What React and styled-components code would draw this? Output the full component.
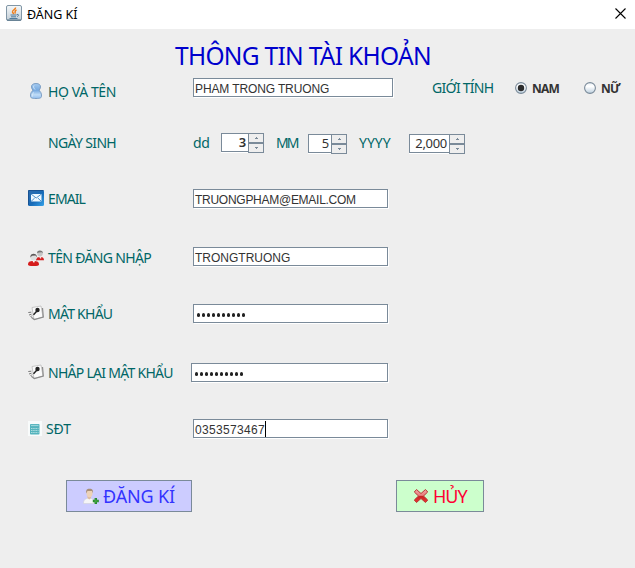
import React from 'react';
import styled, { createGlobalStyle } from 'styled-components';

const Global = createGlobalStyle`
  * { box-sizing: border-box; }
  body { margin: 0; background: #eee; font-family: "Noto Sans", "DejaVu Sans", sans-serif; overflow: hidden; }
`;

const Window = styled.div`
  width: 635px;
  height: 568px;
  background: #eee;
  overflow: hidden;
`;

const TitleBar = styled.header`
  height: 29px;
  background: #fff;
  display: flex;
  align-items: center;
  padding: 0 9px 3px 6px;
`;

const WindowTitle = styled.span`
  flex: 1;
  margin: 3px 0 0 5px;
  font-size: 12.5px;
  line-height: 16px;
  letter-spacing: -0.05px;
  color: #000;
`;

const Form = styled.main`
  display: grid;
  grid-template-rows: 49px 55px 56px 58px 57px 59px 56px 61px 32px;
`;

const Heading = styled.h1`
  margin: 9px 0 0 175px;
  font-size: 24.5px;
  line-height: 36px;
  font-weight: 400;
  letter-spacing: ${(p) => p.$spacing}px;
  color: #0000cd;
  white-space: nowrap;
`;

const Row = styled.div`
  display: flex;
  align-items: flex-start;
  padding-left: 28px;
`;

const Label = styled.div`
  display: flex;
  align-items: center;
  flex: none;
  width: ${(p) => p.$width || 165}px;
  height: 16px;
  margin-top: ${(p) => p.$top || 0}px;
  padding-left: ${(p) => p.$indent || 0}px;
  gap: 4px;
  font-size: 14px;
  line-height: 16px;
  letter-spacing: ${(p) => p.$spacing || 0}px;
  color: #006666;
  white-space: nowrap;
  svg { flex: none; margin-bottom: ${(p) => p.$lift || 0}px; }
`;

const Field = styled.div`
  flex: none;
  display: flex;
  align-items: center;
  width: ${(p) => p.$width || 195}px;
  height: 19px;
  padding: 3px 0 0 1px;
  border: 1px solid #7a8a99;
  box-shadow: 1px 1px 0 #fff;
  background: #fff;
  color: #333;
  font: 12px/14px "Liberation Sans", Arial, sans-serif;
  letter-spacing: ${(p) => p.$spacing || 0}px;
  white-space: nowrap;
`;

const Caret = styled.i`
  width: 1px;
  height: 16px;
  margin-top: -2px;
  background: #000;
`;

const Dots = styled.span`
  display: flex;
  gap: 1.5px;
  padding-left: 1.5px;
`;

const Dot = styled.i`
  width: 3.5px;
  height: 3.5px;
  border-radius: 50%;
  background: #222;
`;

const SpinnerBox = styled.div`
  flex: none;
  display: flex;
  width: ${(p) => p.$width}px;
  height: 20px;
  margin-top: ${(p) => p.$top || 0}px;
`;

const SpinnerValue = styled.span`
  flex: 1;
  height: 19px;
  padding-right: 2px;
  border: 1px solid #7a8a99;
  border-right: 0;
  box-shadow: 0 1px 0 #fff;
  background: #fff;
  color: #333;
  text-align: right;
  font-size: 13px;
  font-weight: ${(p) => (p.$strong ? 600 : 400)};
  line-height: 17px;
  letter-spacing: -0.3px;
`;

const SpinnerButtons = styled.span`
  display: grid;
  grid-template-rows: 10px 10px;
  width: 16px;
`;

const Step = styled.span`
  display: flex;
  align-items: center;
  justify-content: center;
  border: 1px solid #7a8a99;
`;

const Radio = styled.span`
  display: flex;
  align-items: center;
  flex: none;
  width: ${(p) => p.$width}px;
  height: 16px;
  margin-top: 2px;
  gap: 5px;
  font-size: 12px;
  font-weight: 700;
  line-height: 16px;
  letter-spacing: -0.8px;
  color: #333;
`;

const RadioText = styled.span`
  padding-top: 2px;
`;

const Actions = styled.div`
  display: flex;
  padding-left: 66px;
  gap: 204px;
`;

const ActionButton = styled.button`
  display: flex;
  align-items: center;
  width: ${(p) => p.$width}px;
  height: 32px;
  padding: 0 0 0 16px;
  gap: 4px;
  border: 1px solid #7a8a99;
  background: ${(p) => p.$bg};
  color: ${(p) => p.$color};
  font: 18px/24px "Noto Sans", sans-serif;
  letter-spacing: ${(p) => p.$spacing || 0}px;
  white-space: nowrap;
`;

const JavaIcon = () => (
  <svg width="16" height="16" viewBox="0 0 16 16">
    <defs>
      <linearGradient id="jv" x2="0" y2="1"><stop stopColor="#f5f8fa" /><stop offset="1" stopColor="#c3ced6" /></linearGradient>
    </defs>
    <rect x=".5" y=".5" width="15" height="15" rx="1.5" fill="url(#jv)" stroke="#8196a6" />
    <path d="M1 15h14" stroke="#527186" />
    <path d="M9.500 2.500C10 4.500 6 5 6.500 7c.3 1 1.300 1.200 1 2.300M10.500 5C8 6 9.800 7 8.800 8.500" fill="none" stroke="#f07d18" strokeWidth="1.500" />
    <path d="M4.500 10h6M5 11.800h5M3.500 13.500h8M10.800 9.500c2.500-.6 2.300 1.500.2 2" fill="none" stroke="#527c9d" strokeWidth="1" />
  </svg>
);

const CloseIcon = () => (
  <svg width="11" height="11" viewBox="0 0 11 11"><path d="M.5.5l10 10M10.500.5l-10 10" stroke="#000" strokeWidth="1.100" /></svg>
);

const PersonIcon = () => (
  <svg width="16" height="16" viewBox="0 0 16 16">
    <defs><linearGradient id="pn" x2="0" y2="1"><stop stopColor="#a4cbf1" /><stop offset=".45" stopColor="#77a9df" /><stop offset=".75" stopColor="#c0dcf7" /><stop offset="1" stopColor="#91bcec" /></linearGradient></defs>
    <path d="M8 .5C4.800.5 3.300 2 3.500 4c.1 1.500.8 2.400 1.500 3.300C3.500 8.500 2.500 10 2.500 13c0 2 1.500 2.500 5.500 2.500s5.500-.5 5.500-2.500c0-3-1-4.500-2.500-5.700C11.700 6.400 12.400 5.500 12.500 4 12.600 2 11.200.5 8 .5z" fill="url(#pn)" stroke="#7e9fc4" />
    <path d="M6 2.500C5 4 6 5.500 7 6.500M5.500 9.500C4.500 11 4.300 12 4.500 13.500" fill="none" stroke="#d8eafa" />
  </svg>
);

const MailIcon = () => (
  <svg width="16" height="16" viewBox="0 0 16 16">
    <defs><linearGradient id="ml" x2="1" y2="1"><stop stopColor="#2d6cae" /><stop offset=".55" stopColor="#176ab7" /><stop offset="1" stopColor="#35a3ea" /></linearGradient></defs>
    <rect width="16" height="16" rx="1.500" fill="url(#ml)" />
    <path d="M.5 15V.5h15" fill="none" stroke="#185292" />
    <rect x="3" y="4" width="10.500" height="7.500" fill="#eef8ff" />
    <path d="M3 4l5.200 4L13.500 4M3 11.500l3.700-3.500M13.500 11.500L9.800 8" fill="none" stroke="#3984c4" strokeWidth=".9" />
  </svg>
);

const UsersIcon = () => (
  <svg width="16" height="16" viewBox="0 0 16 16">
    <path d="M8 10.500C8 7.500 10 7 12 7s4 .5 4 3.200H9z" fill="#d32020" />
    <path d="M10.500 6.500h3L13 9z" fill="#f4e8e5" />
    <circle cx="12" cy="3.600" r="2.800" fill="#c5c5c5" /><path d="M9 3C9-.3 14.800-.3 15 3l-1.500-.8-2.500.3z" fill="#777" />
    <path d="M0 14.500C0 12 1.500 11 5.500 11S11 12 11 14.500C11 16 8 16 5.500 16S0 16 0 14.500z" fill="#d51c1c" />
    <path d="M3.800 10h3.500L6 13z" fill="#fff" />
    <circle cx="5.700" cy="7.600" r="3.100" fill="#dedede" /><path d="M2.400 7.500C1.800 2.500 9 2.300 9 7.300L7.500 5.500l-3.500.3z" fill="#5b5757" />
  </svg>
);

const KeyIcon = () => (
  <svg width="16" height="16" viewBox="0 0 16 16">
    <path d="M4 2.500L13 1l2 11-9 2.500z" fill="#fafafa" stroke="#bbb" strokeWidth=".8" />
    <path d="M14.500 3l.8 9-9 2.500-3-2.300" fill="none" stroke="#8b8b8b" strokeWidth="1.200" />
    <path d="M.3 7.500l3-.3M1 10l2.500-.8M2.500 12L4 10.500" stroke="#777" />
    <path d="M5.500 9.800L9 6" stroke="#222" strokeWidth="1.500" />
    <circle cx="9.500" cy="5" r="2.200" fill="#222" />
  </svg>
);

const PhoneIcon = () => (
  <svg width="14" height="15" viewBox="0 0 14 15">
    <path fill="#f8fbfb" d="M0 0h14v15H0z" />
    <rect x="2" y="3" width="9.500" height="10.500" rx=".8" fill="#55b4bd" />
    <path d="M3 4.500h7.500" stroke="#9ad6da" strokeWidth="1.200" />
    <path d="M3 7.500h7.500M3 9.500h7.500M3 11.500h7.500" stroke="#b5e0e2" strokeWidth=".9" strokeDasharray="1.500 .7" />
  </svg>
);

const AddUserIcon = () => (
  <svg width="16" height="17" viewBox="0 0 16 17">
    <path d="M.5 15.500c0-4 2-5 5.500-5.500 3.500.4 5.500 1.500 5.500 5.500z" fill="#f5f5f7" stroke="#d0d0d8" strokeWidth=".6" />
    <path d="M4.500 8H8v2l-1.700 1.500L4.500 10z" fill="#dfbd9e" />
    <ellipse cx="6.500" cy="5.300" rx="3" ry="4" fill="#edd2b7" />
    <path d="M3.200 5.500C2.500.3 5.500.6 6.500.7c3.200 0 4 2 3.300 4.500L9 3 4.500 2.900z" fill="#a89078" />
    <path d="M12.800 10v6M9.800 13h6" stroke="#24892b" strokeWidth="2.400" />
    <path d="M12.800 10.700v4.500M10.600 13h4.500" stroke="#52ad4c" strokeWidth=".8" />
  </svg>
);

const CrossIcon = () => (
  <svg width="16" height="16" viewBox="0 0 16 16">
    <defs><linearGradient id="cr" x2="0" y2="1"><stop stopColor="#f2a3a3" /><stop offset=".45" stopColor="#e88080" /><stop offset=".52" stopColor="#c62323" /><stop offset="1" stopColor="#ee3434" /></linearGradient></defs>
    <path d="M3.500 1.500L8 5.500l4.500-4L14.700 4l-4.200 4 4.200 4-2.200 2.500-4.500-4-4.500 4L1.300 12l4.200-4-4.200-4z" fill="url(#cr)" stroke="#b93636" strokeWidth="1" strokeLinejoin="round" />
  </svg>
);

const RadioIcon = ({ checked }) => (
  <svg width="12" height="12" viewBox="0 0 12 12">
    <defs><linearGradient id="rd" x2="0" y2="1"><stop stopColor="#e9f0f6" /><stop offset=".35" stopColor="#fff" /><stop offset="1" stopColor="#bdd0e0" /></linearGradient></defs>
    <circle cx="6" cy="6" r="5.400" fill="url(#rd)" stroke="#7a8a99" strokeWidth="1.100" />
    {checked && <circle cx="6" cy="6" r="3.200" fill="#2b2b2b" />}
  </svg>
);

const Arrow = ({ down }) => (
  <svg width="3" height="2" viewBox="0 0 3 2"><path d={down ? 'M0 0h3v1H2v1H1V1H0z' : 'M1 0h1v1h1v1H0V1h1z'} fill="#7a8a99" /></svg>
);

const Spinner = ({ width, top, value, strong }) => (
  <SpinnerBox $width={width} $top={top}>
    <SpinnerValue $strong={strong}>{value}</SpinnerValue>
    <SpinnerButtons><Step><Arrow /></Step><Step><Arrow down /></Step></SpinnerButtons>
  </SpinnerBox>
);

const Password = () => <Dots>{Array.from({ length: 10 }, (_, i) => <Dot key={i} />)}</Dots>;

export default function App() {
  return (
    <>
      <Global />
      <Window>
        <TitleBar><JavaIcon /><WindowTitle>ĐĂNG KÍ</WindowTitle><CloseIcon /></TitleBar>
        <Form>
          <Heading $spacing={-0.7}>THÔNG TIN TÀI KHOẢN</Heading>
          <Row>
            <Label $top={6} $lift={2} $spacing={-0.4}><PersonIcon />HỌ VÀ TÊN</Label>
            <Field $width={200} $spacing={-0.12}>PHAM TRONG TRUONG</Field>
            <Label $top={2} $width={122} $indent={39} $spacing={-0.75}>GIỚI TÍNH</Label>
            <Radio $width={69}><RadioIcon checked /><RadioText>NAM</RadioText></Radio>
            <Radio $width={40}><RadioIcon /><RadioText>NỮ</RadioText></Radio>
          </Row>
          <Row>
            <Label $top={2} $indent={20} $spacing={-0.65}>NGÀY SINH</Label>
            <Label $top={2} $width={28} $spacing={-0.3}>dd</Label>
            <Spinner width={43} value="3" strong />
            <Label $top={2} $width={44} $indent={12} $spacing={-2}>MM</Label>
            <Spinner width={39} top={1} value="5" />
            <Label $top={2} $width={62} $indent={12}>YYYY</Label>
            <Spinner width={56} top={1} value="2,000" />
          </Row>
          <Row>
            <Label $top={2} $lift={2} $spacing={-0.9}><MailIcon />EMAIL</Label>
            <Field $spacing={-0.27}>TRUONGPHAM@EMAIL.COM</Field>
          </Row>
          <Row>
            <Label $top={3} $spacing={-0.65}><UsersIcon />TÊN ĐĂNG NHẬP</Label>
            <Field>TRONGTRUONG</Field>
          </Row>
          <Row>
            <Label $top={2} $lift={2} $spacing={-0.75}><KeyIcon />MẬT KHẨU</Label>
            <Field><Password /></Field>
          </Row>
          <Row>
            <Label $top={2} $lift={2} $width={163} $spacing={-0.72}><KeyIcon />NHÂP LẠI MẬT KHẨU</Label>
            <Field $width={197}><Password /></Field>
          </Row>
          <Row>
            <Label $top={2} $lift={1} $spacing={-0.1}><PhoneIcon />SĐT</Label>
            <Field $spacing={0.33}>0353573467<Caret /></Field>
          </Row>
          <Actions>
            <ActionButton $width={126} $bg="#ccccff" $color="#3333ff" $spacing={-0.15}><AddUserIcon />ĐĂNG KÍ</ActionButton>
            <ActionButton $width={88} $bg="#ccffcc" $color="#ff0033" $spacing={-1}><CrossIcon />HỦY</ActionButton>
          </Actions>
        </Form>
      </Window>
    </>
  );
}
